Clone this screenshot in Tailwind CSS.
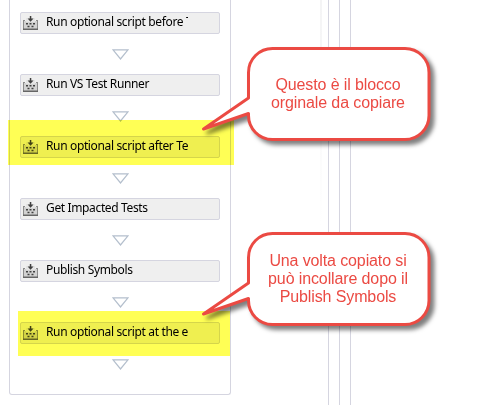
<!DOCTYPE html>
<html lang="it">
<head>
<meta charset="utf-8">
<title>Workflow</title>
<script src="https://cdn.jsdelivr.net/npm/@tailwindcss/browser@4"></script>
</head>
<body class="bg-white">
<svg class="hidden">
  <symbol id="act" viewBox="0 0 15 14">
    <path fill="#d2d2d2" d="M1 5h13v8H1z"/>
    <path fill="#e4e4e4" d="M3 2h9v4H3z"/>
    <path fill="#8c8c8c" d="M0 4h2v1H1v8H0zM13 4h2v9h-1V5h-1z"/>
    <path fill="#666" d="M0 12.500h15V14H0z"/>
    <path fill="#404040" d="M6.800 0h1.500v2.500H10.500L7.550 5.800 4.600 2.500H6.800zM3 7h2v1.600H3zM6.500 7h2v1.600h-2zM10 7h2v1.600h-2zM4.500 9.800h2v1.500h-2zM8.500 9.800h2v1.500h-2z"/>
  </symbol>
  <symbol id="tri" viewBox="0 0 17 12">
    <path fill="#fff" stroke="#b4bfcd" stroke-width="1.300" d="M1 .8H16L8.500 10z"/>
  </symbol>
  <symbol id="bubble" viewBox="0 0 250 110">
    <path fill="#fff" stroke="#eb4a43" stroke-width="3" stroke-linejoin="round" d="M73.500 4.500H206A24 24 0 0 1 230 28.500V71.500A24 24 0 0 1 206 95.500H73.500A24 24 0 0 1 49.500 71.500V69.500L4.500 85L49.500 54V28.500A24 24 0 0 1 73.500 4.500z"/>
  </symbol>
</svg>
<main class="relative h-[405px] w-[499px] overflow-hidden bg-white font-['Noto_Sans','Open_Sans',sans-serif] text-[12px] tracking-[-0.36px] text-black">
  <div class="flex h-full">
    <section class="ml-[9px] flex h-[395px] w-[222px] flex-col items-center rounded-b-[3px] border border-t-0 border-[#d5d5e0] pt-[12px]">
      <div class="flex h-[22px] w-[200px] shrink-0 items-center rounded-[2px] border border-[#d5d5e0] bg-[#efefef] pl-[2px]"><svg class="h-[14px] w-[15px]"><use href="#act"/></svg><span class="mb-[2px] ml-[8px] w-[142px] overflow-hidden whitespace-nowrap leading-[20px]">Run optional script before Test Runner</span></div>
      <svg class="mt-[15px] mb-[13px] h-[12px] w-[17px] shrink-0"><use href="#tri"/></svg>
      <div class="flex h-[22px] w-[200px] shrink-0 items-center rounded-[2px] border border-[#d5d5e0] bg-[#efefef] pl-[2px]"><svg class="h-[14px] w-[15px]"><use href="#act"/></svg><span class="mb-[2px] ml-[8px] w-[142px] overflow-hidden whitespace-nowrap leading-[20px]">Run VS Test Runner</span></div>
      <svg class="mt-[15px] mb-[13px] h-[12px] w-[17px] shrink-0"><use href="#tri"/></svg>
      <div class="flex h-[22px] w-[200px] shrink-0 items-center rounded-[2px] border border-[#d5d5e0] bg-[#efefef] pl-[2px]"><svg class="h-[14px] w-[15px]"><use href="#act"/></svg><span class="mb-[2px] ml-[8px] w-[142px] overflow-hidden whitespace-nowrap leading-[20px]">Run optional script after Test Runner</span></div>
      <svg class="mt-[15px] mb-[13px] h-[12px] w-[17px] shrink-0"><use href="#tri"/></svg>
      <div class="flex h-[22px] w-[200px] shrink-0 items-center rounded-[2px] border border-[#d5d5e0] bg-[#efefef] pl-[2px]"><svg class="h-[14px] w-[15px]"><use href="#act"/></svg><span class="mb-[2px] ml-[8px] w-[142px] overflow-hidden whitespace-nowrap leading-[20px]">Get Impacted Tests</span></div>
      <svg class="mt-[15px] mb-[13px] h-[12px] w-[17px] shrink-0"><use href="#tri"/></svg>
      <div class="flex h-[22px] w-[200px] shrink-0 items-center rounded-[2px] border border-[#d5d5e0] bg-[#efefef] pl-[2px]"><svg class="h-[14px] w-[15px]"><use href="#act"/></svg><span class="mb-[2px] ml-[8px] w-[142px] overflow-hidden whitespace-nowrap leading-[20px]">Publish Symbols</span></div>
      <svg class="mt-[15px] mb-[13px] h-[12px] w-[17px] shrink-0"><use href="#tri"/></svg>
      <div class="flex h-[22px] w-[200px] shrink-0 items-center rounded-[2px] border border-[#d5d5e0] bg-[#efefef] pl-[2px]"><svg class="h-[14px] w-[15px]"><use href="#act"/></svg><span class="mb-[2px] ml-[8px] w-[142px] overflow-hidden whitespace-nowrap leading-[20px]">Run optional script at the e</span></div>
      <svg class="mt-[15px] h-[12px] w-[17px] shrink-0"><use href="#tri"/></svg>
    </section>
    <div class="ml-[89px] h-[225px] w-[2px] bg-linear-to-b from-[#f4f4f5] to-white"></div>
    <div class="ml-[6px] flex gap-[10px]">
      <div class="w-px bg-[#d5d5e0]"></div>
      <div class="w-px bg-[#d5d5e0]"></div>
      <div class="w-px bg-[#d5d5e0]"></div>
    </div>
  </div>

  <!-- highlighter marks -->
  <div class="absolute left-[8px] top-[120px] h-[45px] w-[226px] bg-[#ffff55] mix-blend-multiply"></div>
  <div class="absolute left-[18px] top-[311px] h-[45px] w-[212px] bg-[#ffff55] mix-blend-multiply"></div>

  <!-- callouts -->
  <div class="absolute left-[199px] top-[44px] h-[110px] w-[250px] font-['Liberation_Sans',Arial,sans-serif] text-[16px] leading-[18px] tracking-[-0.12px] text-[#eb4a43]">
    <svg class="absolute inset-0 h-[110px] w-[250px] overflow-visible drop-shadow-[4px_4px_2px_rgba(0,0,0,0.5)]"><use href="#bubble"/></svg>
    <div class="relative ml-[50px] flex h-[100px] w-[178px] items-center justify-center text-center">Questo è il blocco<br>orginale da copiare</div>
  </div>
  <div class="absolute left-[199px] top-[229px] h-[110px] w-[250px] font-['Liberation_Sans',Arial,sans-serif] text-[16px] leading-[18px] tracking-[-0.12px] text-[#eb4a43]">
    <svg class="absolute inset-0 h-[110px] w-[250px] overflow-visible drop-shadow-[4px_4px_2px_rgba(0,0,0,0.5)]"><use href="#bubble"/></svg>
    <div class="relative ml-[50px] flex h-[100px] w-[178px] items-center justify-center text-center">Una volta copiato si<br>può incollare dopo il<br>Publish Symbols</div>
  </div>
</main>
</body>
</html>
